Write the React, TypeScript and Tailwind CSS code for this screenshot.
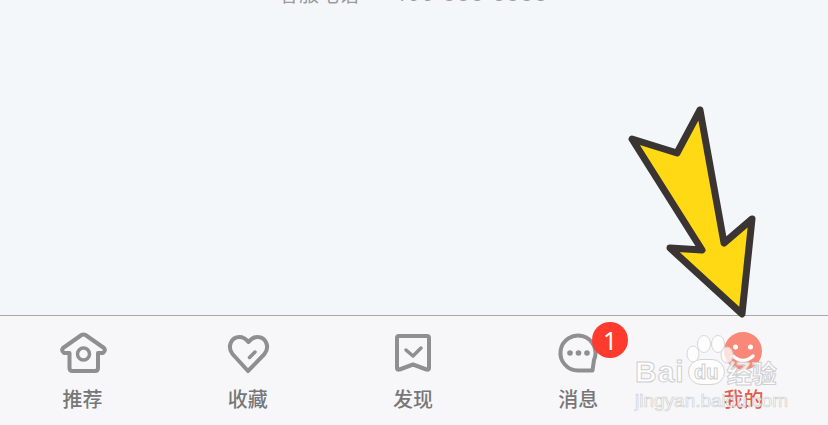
const stroke = '#8f8f8f';

function HomeIcon() {
  return (
    <svg viewBox="0 0 48 48" className="w-12 h-12" fill="none" stroke={stroke} strokeWidth="4" strokeLinejoin="round" strokeLinecap="round">
      <path d="M10.500 24 H5 Q2 21.500 4 19 L22.500 6 Q24.500 5 26.500 6 L45 19 Q47 21.500 44 24 H39 V39 Q39 42 36 42 H13.500 Q10.500 42 10.500 39 Z" />
      <circle cx="24.500" cy="25" r="6" strokeWidth="3.500" />
    </svg>
  );
}

function HeartIcon() {
  return (
    <svg viewBox="0 0 48 48" className="w-12 h-12" fill="none" stroke={stroke} strokeWidth="4" strokeLinejoin="round" strokeLinecap="round">
      <path d="M24 42 L8.500 25 C3 18 7 8 15.500 8 C19 8 22 10 24.500 13 C27 10 30 8 33.500 8 C42 8 46 18 40.500 25 Z" />
      <path d="M25.500 28.500 L31 23" strokeWidth="3.500" />
    </svg>
  );
}

function BookmarkIcon() {
  return (
    <svg viewBox="0 0 48 48" className="w-12 h-12" fill="none" stroke={stroke} strokeWidth="4" strokeLinejoin="round" strokeLinecap="round">
      <path d="M10 7 H38 Q40 7 40 9 V39 Q40 41.500 37.500 40.500 L24 35.500 L10.500 40.500 Q8 41.500 8 39 V9 Q8 7 10 7 Z" />
      <path d="M17 21 L24 27 L32 19" strokeWidth="3.500" />
    </svg>
  );
}

function BubbleIcon() {
  return (
    <svg viewBox="0 0 48 48" className="w-12 h-12" fill="none" stroke={stroke} strokeWidth="4" strokeLinejoin="round" strokeLinecap="round">
      <path d="M24 41.500 A17.500 17.500 0 1 1 40 31 L38.500 41.500 Z" />
      <circle cx="16" cy="24" r="2.800" fill={stroke} stroke="none" />
      <circle cx="24.500" cy="24" r="2.800" fill={stroke} stroke="none" />
      <circle cx="33" cy="24" r="2.800" fill={stroke} stroke="none" />
    </svg>
  );
}

function SmileIcon() {
  return (
    <svg viewBox="0 0 48 48" className="w-12 h-12" fill="none">
      <circle cx="24" cy="22" r="19" fill="#f98878" />
      <circle cx="16.500" cy="18" r="2.500" fill="#fff" />
      <circle cx="31.500" cy="18" r="2.500" fill="#fff" />
      <path d="M14 27 Q24 36 34 27" stroke="#fff" strokeWidth="3.500" strokeLinecap="round" />
    </svg>
  );
}

function Tab({ label, active, children }: { label: string; active?: boolean; children: React.ReactNode }) {
  return (
    <div className="flex flex-col items-center">
      {children}
      <span className={`mt-2 text-[20px] leading-7 font-medium ${active ? 'text-[#e25c4c]' : 'text-[#777]'}`}>{label}</span>
    </div>
  );
}

function Arrow() {
  return (
    <svg className="absolute left-0 top-0 pointer-events-none" width="828" height="425" viewBox="0 0 828 425">
      <path
        d="M700 110 L677 153 L632 139 L702 250 L670 248 L742 314 L752 219 L724 243 Z"
        fill="#ffd914"
        stroke="#3a3433"
        strokeWidth="7"
        strokeLinejoin="round"
      />
    </svg>
  );
}

function Watermark() {
  return (
    <div className="absolute left-[635px] top-[334px] w-[150px] pointer-events-none">
      <svg className="absolute left-[50px] top-0" width="60" height="40" viewBox="0 0 60 40">
        <g fill="#fff" fillOpacity="0.75" stroke="#d0d0d0" strokeOpacity="0.8">
          <ellipse cx="8" cy="20" rx="6" ry="8" />
          <ellipse cx="19" cy="10" rx="6.500" ry="8.500" />
          <ellipse cx="33" cy="10" rx="6.500" ry="8.500" />
          <ellipse cx="42" cy="21" rx="6" ry="8" />
        </g>
      </svg>
      <div className="flex items-center h-[26px] mt-[25px] font-['Liberation_Sans',sans-serif] font-bold text-white/80 [-webkit-text-stroke:1px_#cfcfcf]">
        <span className="text-[30px] leading-none tracking-[1px]">Bai</span>
        <span className="ml-[3px] w-[37px] h-[26px] rounded-full bg-white/70 border border-[#d4d4d4] flex items-center justify-center text-[20px] leading-none">du</span>
        <span className="ml-[2px] text-[25px] leading-none font-['Noto_Sans_CJK_SC',sans-serif]">经验</span>
      </div>
      <div className="mt-[6px] whitespace-nowrap text-[19px] leading-5 font-['Liberation_Sans',sans-serif] text-white/80 [-webkit-text-stroke:0.7px_#d0d0d0]">jingyan.baidu.com</div>
    </div>
  );
}

export default function App() {
  return (
    <div className="relative w-[828px] h-[425px] overflow-hidden flex flex-col bg-[#f4f7fa] font-['Noto_Sans_CJK_SC','Noto_Sans',sans-serif]">
      <div className="h-[315px] shrink-0 flex justify-center">
        <div className="flex gap-[35px] -mt-[13px] h-[14px] text-[20px] leading-[14px] text-[#9c9c9c]">
          <span>客服电话</span>
          <span className="tracking-[2.500px] font-['Noto_Sans',sans-serif]">400 888 8888</span>
        </div>
      </div>

      <div className="flex-1 grid grid-cols-5 pt-[13px] pr-[2px] border-t border-[#a8a8ac] bg-[#f7f7f9]">
        <Tab label="推荐"><HomeIcon /></Tab>
        <Tab label="收藏"><HeartIcon /></Tab>
        <Tab label="发现"><BookmarkIcon /></Tab>
        <Tab label="消息">
          <div className="relative">
            <BubbleIcon />
            <span className="absolute left-[38px] -top-[7px] w-9 h-9 rounded-full bg-[#ff3b30] flex items-center justify-center text-white text-[25px] leading-none font-['Noto_Sans',sans-serif]">1</span>
          </div>
        </Tab>
        <Tab label="我的" active><SmileIcon /></Tab>
      </div>

      <Arrow />
      <Watermark />
    </div>
  );
}
